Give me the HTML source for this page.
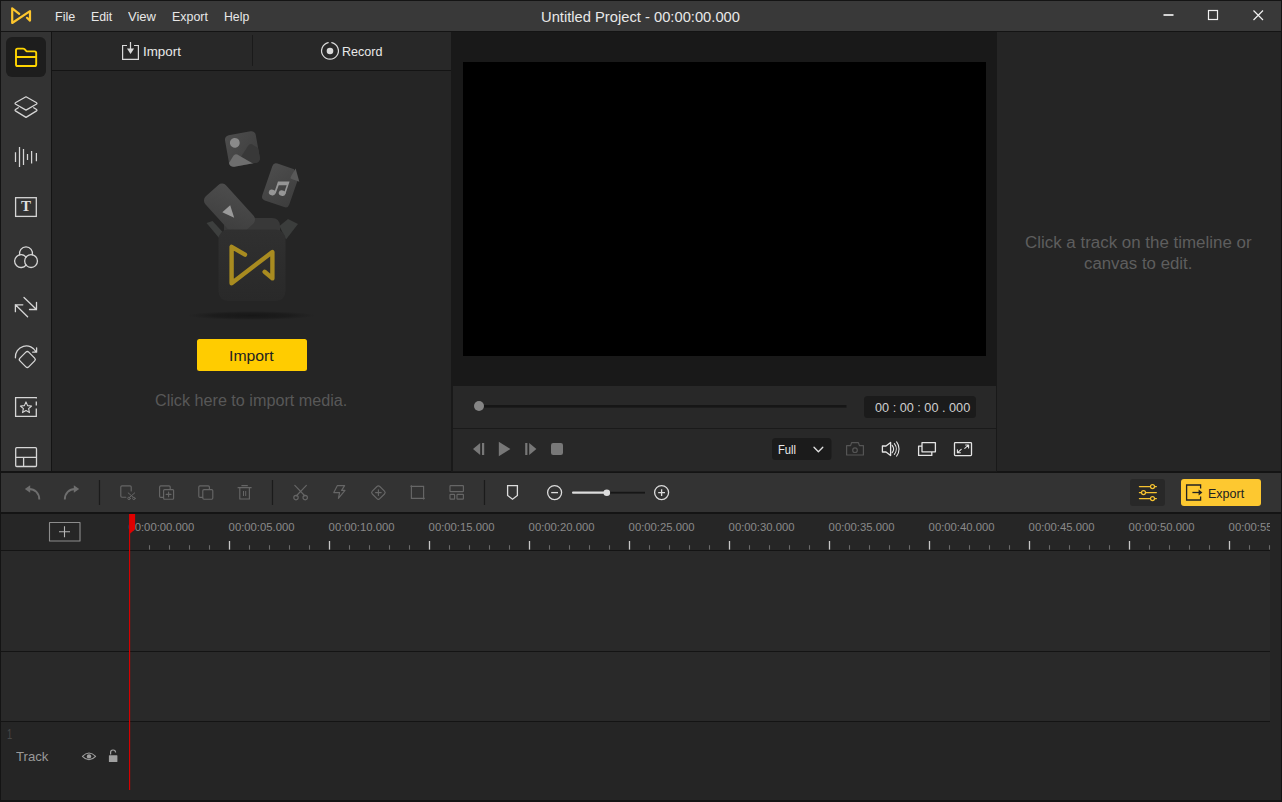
<!DOCTYPE html>
<html><head><meta charset="utf-8"><title>Untitled Project</title>
<style>
*{box-sizing:border-box;margin:0;padding:0}
html,body{width:1282px;height:802px;overflow:hidden;background:#141414}
body{position:relative;font-family:"Liberation Sans",sans-serif;color:#e6e6e6;font-size:13px}
.abs,svg.i{position:absolute}
.t{position:absolute;white-space:nowrap;line-height:1;transform-origin:0 0}
svg.i{overflow:visible;fill:none;stroke-linecap:round;stroke-linejoin:round}
#titlebar{left:1px;top:1px;width:1280px;height:30px;background:#393939}
#sidebar{left:1px;top:32px;width:50px;height:439px;background:#333}
#sel{left:6px;top:37px;width:40px;height:40px;border-radius:6px;background:#1d1d1d}
#lptab{left:52px;top:32px;width:399px;height:38px;background:#282828}
#lp{left:52px;top:71px;width:399px;height:400px;background:#252525}
#pv{left:451px;top:32px;width:546px;height:440px;background:#191919}
#video{left:463px;top:62px;width:523px;height:294px;background:#000}
#ctl{left:453px;top:386px;width:543px;height:85px;background:#282828}
#ctlsep{left:453px;top:428px;width:543px;height:1px;background:#1a1a1a}
#rp{left:997px;top:32px;width:284px;height:439px;background:#252525}
#tb{left:1px;top:473px;width:1280px;height:39px;background:#333}
#ruler{left:1px;top:514px;width:1269px;height:36px;background:#262626}
#tr1{left:1px;top:551px;width:1269px;height:100px;background:#292929}
#tr2{left:1px;top:652px;width:1269px;height:69px;background:#292929}
#tr3{left:1px;top:722px;width:1280px;height:78px;background:#252525}
#rcol{left:1270px;top:514px;width:11px;height:286px;background:#252525}
.rl{top:522.1px;font-size:11.3px;color:#8a8a8a}
#rlab{left:0;top:0;width:1270px;height:802px;overflow:hidden}
</style></head><body>
<div class="abs" id="titlebar"></div>
<div class="abs" id="sidebar"></div>
<div class="abs" id="sel"></div>
<div class="abs" id="lptab"></div>
<div class="abs" id="lp"></div>
<div class="abs" id="pv"></div>
<div class="abs" id="video"></div>
<div class="abs" id="ctl"></div>
<div class="abs" id="ctlsep"></div>
<div class="abs" id="rp"></div>
<div class="abs" id="tb"></div>
<div class="abs" id="ruler"></div>
<div class="abs" id="tr1"></div>
<div class="abs" id="tr2"></div>
<div class="abs" id="tr3"></div>
<div class="abs" id="rcol"></div>
<svg class="i" style="left:180px;top:110px" width="140" height="220" viewBox="180 110 140 220">
<defs>
<linearGradient id="gc" x1="0" y1="0" x2="1" y2="1"><stop offset="0" stop-color="#4d4d4d"/><stop offset="1" stop-color="#3d3d3d"/></linearGradient>
<linearGradient id="gb" x1="0" y1="0" x2="0" y2="1"><stop offset="0" stop-color="#303030"/><stop offset="1" stop-color="#292929"/></linearGradient>
<radialGradient id="gs"><stop offset="0" stop-color="#171717"/><stop offset="0.6" stop-color="#1a1a1a" stop-opacity="0.8"/><stop offset="1" stop-color="#1c1c1c" stop-opacity="0"/></radialGradient>
<clipPath id="cimg"><rect x="-15.6" y="-16" width="31.2" height="32" rx="4.5"/></clipPath>
</defs>
<!-- shadow -->
<ellipse cx="251.5" cy="315.5" rx="64" ry="4.5" fill="url(#gs)"/>
<!-- image card -->
<g transform="translate(242.4,149) rotate(-10)">
<rect x="-15.6" y="-16" width="31.2" height="32" rx="4.5" fill="url(#gc)"/>
<g clip-path="url(#cimg)">
<path d="M-4,9 L6,-2 Q8.5,-4.5 11,-2.5 L17,3 V17 H-4 Z" fill="#383838"/>
<path d="M-16,12 L-10,5 Q-8,3 -6,4.6 L9,17 H-16 Z" fill="#6e6e6e"/>
</g>
<circle cx="-6.4" cy="-7.4" r="4.9" fill="#8a8a8a"/>
</g>
<!-- music card -->
<g transform="translate(280.6,185.2) rotate(19)">
<path d="M-14,-15.5 Q-14,-19.5 -10,-19.5 H7.5 L14.5,-10 V15.5 Q14.500,19.5 10.5,19.5 H-10 Q-14,19.5 -14,15.500 Z" fill="url(#gc)"/>
<path d="M8.8,-20.6 L16.6,-9.4 H8.4 Q6.6,-9.4 6.800,-11.4 Z" fill="#595959"/>
<g transform="translate(-0.6,2.6) rotate(-5)" fill="#969696"><ellipse cx="-5.6" cy="6.6" rx="3.4" ry="2.8"/><ellipse cx="4.2" cy="4.8" rx="3.4" ry="2.8"/>
<path d="M-3.6,6.6 L-2.6,-5.4 L8.6,-8.4 L7.600,4.8 L6,4.8 L6.7,-4 L-1,-2 L-2,6.6 Z"/></g>
</g>
<!-- flaps + back -->
<path d="M206.500,223 L212.500,221 L223.5,233 L219.500,238.500 Z" fill="#3d3f3e"/>
<path d="M288,219 L298,224 L286,239.500 L279.500,226 Z" fill="#3b3d3c"/>
<path d="M224,238 V224 Q224,218 230,218 H272 Q279.500,218 280,226 V238 Z" fill="#383838"/>
<!-- play card -->
<g transform="translate(229.500,210) rotate(48)">
<rect x="-26" y="-14" width="52" height="28" rx="5.5" fill="url(#gc)"/>
<path d="M-3.1,-3.7 L8.9,1.7 L-3.1,6.9 Z" fill="#9a9a9a"/>
</g>
<!-- front of box -->
<rect x="218.5" y="229.6" width="67" height="71.4" rx="9.5" fill="url(#gb)"/>
<path d="M245,254.600 L231.600,246.800 V283.200 L272.400,252 V278.400 L264.600,271.800" stroke="#a88b20" stroke-width="4.400" fill="none" stroke-linejoin="round" stroke-linecap="round"/>
</svg>

<svg class="i" id="ic" style="left:0;top:0" width="1282" height="802" viewBox="0 0 1282 802">
<!-- app logo -->
<path d="M19.2,13.8 L12.2,8.3 L12.2,23 L30,11.2 L30,20.6 L27,17.8" stroke="#fdc52d" stroke-width="2.2"/>
<!-- window controls -->
<g stroke="#f0f0f0" stroke-width="1.2" stroke-linecap="butt" stroke-linejoin="miter">
<path d="M1163.5,15 H1173.5" stroke-width="1.7"/>
<rect x="1208.5" y="10.5" width="9" height="9"/>
<path d="M1253.5,10.5 L1263,20 M1263,10.5 L1253.5,20"/>
</g>
<!-- sidebar: folder (selected) -->
<path d="M17.6,48.6 H23 Q23.9,48.6 24.5,49.2 L26.2,50.9 Q26.8,51.4 27.6,51.4 H34.6 Q36.2,51.4 36.2,53 V64.4 Q36.2,66 34.6,66 H17.6 Q16,66 16,64.4 V50.2 Q16,48.6 17.6,48.6 Z M16,57 H36.2" stroke="#ffd500" stroke-width="1.9"/>
<!-- sidebar icons -->
<g stroke="#d6d6d6" stroke-width="1.3">
<!-- layers -->
<path d="M26,96.8 L36.2,102.5 Q37.700,103.4 36.2,104.3 L26,110.1 L15.8,104.3 Q14.3,103.4 15.8,102.5 Z"/>
<path d="M18.3,107.8 L15.8,109.3 Q14.3,110.2 15.8,111.1 L26,117.4 L36.2,111.1 Q37.7,110.2 36.2,109.3 L33.7,107.8"/>
<!-- audio -->
<path d="M15.5,152.2 V162 M19.5,147 V167 M23.5,149 V165 M27.5,154 V160 M31.6,151 V163.4 M36.4,153 V161.2" stroke-linecap="butt" stroke-width="1.25"/>
<!-- text box -->
<rect x="15.6" y="197.7" width="20.7" height="18.7" stroke-linejoin="miter"/>
<!-- colour circles -->
<circle cx="31.05" cy="261.1" r="6.4"/><path d="M26.03,257.14 A6.4,6.4 0 1 0 26.03,265.06"/>
<path d="M19.7,254.9 A6.5,6.5 0 1 1 32.3,254.9"/>
<!-- transition arrows -->
<path d="M24,297.5 L36.5,309.5 M29.5,309.5 H36.5 V302.3 M27.6,316.7 L15.4,304.8 M22.8,304.8 H15.4 V311.7" stroke-linejoin="miter"/>
<!-- rotate -->
<path d="M15.4,357.8 A11,11 0 0 1 36.2,352 M32.7,352.2 H36.6 V347.8"/>
<rect x="-6.2" y="-6.2" width="12.4" height="12.4" rx="2" transform="translate(27.3,359.5) rotate(45)"/>
<!-- star box -->
<path d="M36.3,398.6 V397.7 H15.6 V416.4 H36.3 V408.5 M36.3,401.6 V405.6" stroke-linejoin="miter" stroke-linecap="butt"/>
<path d="M26,401.9 L27.6,405.6 L31.6,406 L28.6,408.7 L29.5,412.6 L26,410.6 L22.5,412.6 L23.4,408.7 L20.4,406 L24.4,405.6 Z" stroke-width="1.1"/>
<!-- layout -->
<path d="M16.7,447.7 H35.5 Q36.5,447.7 36.5,448.7 V465.5 Q36.5,466.5 35.5,466.5 H16.7 Q15.7,466.5 15.7,465.5 V448.7 Q15.7,447.7 16.7,447.7 Z M15.7,457.4 H36.5 M23.6,457.4 V466.5"/>
</g>
<!-- Import / Record tab icons -->
<g stroke="#dadada" stroke-width="1.2" stroke-linejoin="miter">
<path d="M127,45.5 H122.6 V59.4 H138.4 V45.5 H134" stroke-linecap="butt"/>
<path d="M130.5,42 V50" stroke-linecap="butt"/>
<path d="M127,48.5 H134.1 L130.55,53.9 Z" fill="#dadada" stroke="none"/>
<path d="M331.8,42.6 A8.4,8.4 0 1 1 328.2,42.6" />
<circle cx="330" cy="51" r="3.3" fill="#dadada" stroke="none"/>
</g>
<path d="M252.5,35.5 V65.5" stroke="#1a1a1a" stroke-width="1"/>
<!-- Import button -->
<rect x="197" y="339" width="110" height="32" rx="2.5" fill="#ffcc00"/>
<!-- preview slider -->
<rect x="479" y="405" width="367.5" height="2.6" fill="#161616"/>
<circle cx="479" cy="406" r="5" fill="#858585"/>
<rect x="864" y="396" width="112" height="22" rx="3.5" fill="#1b1b1b"/>
<!-- playback -->
<g fill="#787878" stroke="none">
<path d="M480.2,443 V455 L473,449 Z"/><rect x="482" y="443" width="2.2" height="12"/>
<path d="M498.8,441.8 V456.2 L510.4,449 Z"/>
<rect x="525.2" y="443" width="2.2" height="12"/><path d="M529.2,443 V455 L536.4,449 Z"/>
<rect x="551" y="443" width="12" height="12" rx="2.2"/>
</g>
<!-- Full dropdown -->
<rect x="772" y="438" width="59.5" height="22" rx="3.5" fill="#1b1b1b"/>
<path d="M814,447.2 L818.4,451.8 L822.8,447.2" stroke="#e0e0e0" stroke-width="1.3"/>
<!-- camera (disabled) -->
<g stroke="#555" stroke-width="1.2">
<path d="M846.6,445.6 H850.6 L851.6,442.6 H858.4 L859.4,445.6 H863.4 V455 H846.6 Z" stroke-linejoin="round"/>
<circle cx="855" cy="450.2" r="2.3"/>
</g>
<!-- volume, windows, fullscreen -->
<g stroke="#e4e4e4" stroke-width="1.3">
<path d="M882.4,446 H886 L890.6,442.4 V455.6 L886,452 H882.4 Z" stroke-linejoin="round"/>
<path d="M892.2,445.3 A6,6 0 0 1 892.2,452.7 M894.4,443.6 A8.8,8.8 0 0 1 894.4,454.4 M896.6,441.9 A11.6,11.6 0 0 1 896.6,456.1" stroke-width="1.1"/>
<path d="M922,442.6 H935.4 V451.8 H922 Z M921.8,446.2 H918.6 V455.4 H931.8 V452" stroke-linejoin="round"/>
<rect x="954.5" y="442.6" width="17" height="13" rx="0.8"/>
<path d="M957.6,452.6 L961.2,449.4 M957.4,449.8 V452.8 H960.4 M964.8,448.4 L968.4,445.2 M965.6,445 H968.6 V448" stroke-width="1.1"/>
</g>
<!-- toolbar separators -->
<path d="M99.5,480 V505 M272.5,480 V505 M484.5,480 V505" stroke="#1b1b1b" stroke-width="1.2" stroke-linecap="butt"/>
<!-- toolbar disabled icons -->
<g stroke="#666" stroke-width="1.15">
<!-- undo / redo -->
<path d="M39.3,499.6 C39.3,493.2 35,489 29,489" stroke="#6e6e6e" stroke-width="1.9" stroke-linecap="butt"/>
<path d="M24.8,489 L30.2,485.2 V492.8 Z" fill="#6e6e6e" stroke="none"/>
<path d="M64.8,499.6 C64.8,493.2 69.1,489 75.1,489" stroke="#6e6e6e" stroke-width="1.9" stroke-linecap="butt"/>
<path d="M79.2,489 L73.8,485.2 V492.8 Z" fill="#6e6e6e" stroke="none"/>
<!-- cut clip -->
<path d="M125.8,497.2 H122 Q120.8,497.2 120.8,496 V487 Q120.8,485.8 122,485.8 H130 Q131.2,485.8 131.2,487 V491"/>
<path d="M128.2,492.9 L133.3,497.3 M134.7,492.9 L129.6,497.3" stroke-width="1"/>
<circle cx="129" cy="498.4" r="1.25" stroke-width="0.9"/><circle cx="133.9" cy="498.4" r="1.25" stroke-width="0.9"/>
<!-- duplicate -->
<path d="M163.4,497.4 H160.8 Q159.6,497.4 159.6,496.2 V487 Q159.6,485.8 160.8,485.8 H169 Q170.2,485.8 170.2,487 V489.4"/>
<rect x="163.6" y="489.6" width="10" height="9.6" rx="1"/>
<path d="M166.2,494.4 H171 M168.6,492 V496.8" stroke-width="1.1"/>
<!-- copy -->
<path d="M202.6,497.4 H200 Q198.8,497.4 198.8,496.2 V487 Q198.8,485.8 200,485.8 H208.2 Q209.4,485.8 209.4,487 V489.4"/>
<rect x="202.8" y="489.6" width="10" height="9.6" rx="1.2"/>
<!-- trash -->
<path d="M237.6,487.6 H251.6 M241.4,485.6 H247.8 M239.8,487.8 V499 H249.4 V487.8" stroke-linecap="butt" stroke-linejoin="miter"/>
<path d="M243.5,491 V496 M245.7,491 V496" stroke-width="1" stroke-linecap="butt"/>
<!-- scissors -->
<path d="M294.8,485.4 L305,496 M306.4,485.4 L296.2,496"/>
<circle cx="296" cy="497.6" r="2.2"/><circle cx="305.2" cy="497.6" r="2.2"/>
<!-- lightning -->
<path d="M337.4,485.6 H344.6 L341.6,490.4 H345 L338.4,498.4 L339.6,492.6 H333.8 Z"/>
<!-- keyframe -->
<rect x="-5.3" y="-5.3" width="10.6" height="10.6" rx="2" transform="translate(378.4,492.6) rotate(45)"/>
<path d="M375.6,492.6 H381.2 M378.4,489.8 V495.4" stroke-width="1.1"/>
<!-- crop -->
<path d="M411.4,485.2 V498.4 H424.8 M410.4,486.4 H423.6 V499.6" stroke-linecap="butt" stroke-linejoin="miter"/>
<!-- layout -->
<rect x="450" y="485.6" width="13.4" height="6" rx="0.6"/>
<rect x="450" y="494.4" width="4.6" height="4.8" rx="0.6"/>
<rect x="457" y="494.4" width="6.4" height="4.8" rx="0.6"/>
</g>
<!-- marker + zoom -->
<g stroke="#dcdcdc" stroke-width="1.3">
<path d="M507.6,485.6 H517.4 V495.4 L512.5,499.2 L507.6,495.4 Z" stroke-linejoin="miter"/>
<circle cx="554.6" cy="492.6" r="7"/><path d="M551.2,492.6 H558" stroke-linecap="butt"/>
<circle cx="661.6" cy="492.6" r="7"/><path d="M658.2,492.6 H665 M661.6,489.2 V496" stroke-linecap="butt"/>
</g>
<rect x="607" y="491.8" width="38" height="1.8" fill="#161616"/>
<rect x="572" y="491.6" width="35" height="2.2" rx="1" fill="#dcdcdc"/>
<circle cx="606.8" cy="492.7" r="3.3" fill="#dcdcdc"/>
<!-- settings & export -->
<rect x="1130" y="479" width="35" height="27" rx="3" fill="#282828"/>
<g stroke="#f5c230" stroke-width="1.2">
<path d="M1139.4,486.6 H1150.4 M1154.6,486.6 H1156.4 M1139.4,492.6 H1141.4 M1145.6,492.6 H1156.4 M1139.4,498.6 H1150.4 M1154.6,498.6 H1156.4"/>
<circle cx="1152.5" cy="486.6" r="2"/><circle cx="1143.5" cy="492.6" r="2"/><circle cx="1152.5" cy="498.6" r="2"/>
</g>
<rect x="1181" y="479" width="80" height="27" rx="3" fill="#fdc830"/>
<path d="M1200.6,488.4 V485 H1186.6 V500 H1200.6 V496.6" stroke="#222" stroke-width="1.3" stroke-linejoin="miter" stroke-linecap="butt"/>
<path d="M1192.4,492.5 H1199.5" stroke="#222" stroke-width="1.3" stroke-linecap="butt"/>
<path d="M1198.6,489.6 L1202.4,492.5 L1198.6,495.4 Z" fill="#222"/>
<!-- add track -->
<rect x="49.5" y="522.5" width="30.5" height="18.5" stroke="#8c8c8c" stroke-width="1.1"/>
<path d="M59,531.7 H70 M64.5,526.2 V537.2" stroke="#b4b4b4" stroke-width="1.1" stroke-linecap="butt"/>
<!-- ruler ticks -->
<g id="ticks" stroke-linecap="butt"><path d="M149.5,545.2 V549.6" stroke="#6a6a6a" stroke-width="1.1"/><path d="M169.5,545.2 V549.6" stroke="#6a6a6a" stroke-width="1.1"/><path d="M189.5,545.2 V549.6" stroke="#6a6a6a" stroke-width="1.1"/><path d="M209.5,545.2 V549.6" stroke="#6a6a6a" stroke-width="1.1"/><path d="M229.5,541 V549.6" stroke="#c8c8c8" stroke-width="1.3"/><path d="M249.5,545.2 V549.6" stroke="#6a6a6a" stroke-width="1.1"/><path d="M269.5,545.2 V549.6" stroke="#6a6a6a" stroke-width="1.1"/><path d="M289.5,545.2 V549.6" stroke="#6a6a6a" stroke-width="1.1"/><path d="M309.5,545.2 V549.6" stroke="#6a6a6a" stroke-width="1.1"/><path d="M329.5,541 V549.6" stroke="#c8c8c8" stroke-width="1.3"/><path d="M349.5,545.2 V549.6" stroke="#6a6a6a" stroke-width="1.1"/><path d="M369.5,545.2 V549.6" stroke="#6a6a6a" stroke-width="1.1"/><path d="M389.5,545.2 V549.6" stroke="#6a6a6a" stroke-width="1.1"/><path d="M409.5,545.2 V549.6" stroke="#6a6a6a" stroke-width="1.1"/><path d="M429.5,541 V549.6" stroke="#c8c8c8" stroke-width="1.3"/><path d="M449.5,545.2 V549.6" stroke="#6a6a6a" stroke-width="1.1"/><path d="M469.5,545.2 V549.6" stroke="#6a6a6a" stroke-width="1.1"/><path d="M489.5,545.2 V549.6" stroke="#6a6a6a" stroke-width="1.1"/><path d="M509.5,545.2 V549.6" stroke="#6a6a6a" stroke-width="1.1"/><path d="M529.5,541 V549.6" stroke="#c8c8c8" stroke-width="1.3"/><path d="M549.5,545.2 V549.6" stroke="#6a6a6a" stroke-width="1.1"/><path d="M569.5,545.2 V549.6" stroke="#6a6a6a" stroke-width="1.1"/><path d="M589.5,545.2 V549.6" stroke="#6a6a6a" stroke-width="1.1"/><path d="M609.5,545.2 V549.6" stroke="#6a6a6a" stroke-width="1.1"/><path d="M629.5,541 V549.6" stroke="#c8c8c8" stroke-width="1.3"/><path d="M649.5,545.2 V549.6" stroke="#6a6a6a" stroke-width="1.1"/><path d="M669.5,545.2 V549.6" stroke="#6a6a6a" stroke-width="1.1"/><path d="M689.5,545.2 V549.6" stroke="#6a6a6a" stroke-width="1.1"/><path d="M709.5,545.2 V549.6" stroke="#6a6a6a" stroke-width="1.1"/><path d="M729.5,541 V549.6" stroke="#c8c8c8" stroke-width="1.3"/><path d="M749.5,545.2 V549.6" stroke="#6a6a6a" stroke-width="1.1"/><path d="M769.5,545.2 V549.6" stroke="#6a6a6a" stroke-width="1.1"/><path d="M789.5,545.2 V549.6" stroke="#6a6a6a" stroke-width="1.1"/><path d="M809.5,545.2 V549.6" stroke="#6a6a6a" stroke-width="1.1"/><path d="M829.5,541 V549.6" stroke="#c8c8c8" stroke-width="1.3"/><path d="M849.5,545.2 V549.6" stroke="#6a6a6a" stroke-width="1.1"/><path d="M869.5,545.2 V549.6" stroke="#6a6a6a" stroke-width="1.1"/><path d="M889.5,545.2 V549.6" stroke="#6a6a6a" stroke-width="1.1"/><path d="M909.5,545.2 V549.6" stroke="#6a6a6a" stroke-width="1.1"/><path d="M929.5,541 V549.6" stroke="#c8c8c8" stroke-width="1.3"/><path d="M949.5,545.2 V549.6" stroke="#6a6a6a" stroke-width="1.1"/><path d="M969.5,545.2 V549.6" stroke="#6a6a6a" stroke-width="1.1"/><path d="M989.5,545.2 V549.6" stroke="#6a6a6a" stroke-width="1.1"/><path d="M1009.5,545.2 V549.6" stroke="#6a6a6a" stroke-width="1.1"/><path d="M1029.5,541 V549.6" stroke="#c8c8c8" stroke-width="1.3"/><path d="M1049.5,545.2 V549.6" stroke="#6a6a6a" stroke-width="1.1"/><path d="M1069.5,545.2 V549.6" stroke="#6a6a6a" stroke-width="1.1"/><path d="M1089.5,545.2 V549.6" stroke="#6a6a6a" stroke-width="1.1"/><path d="M1109.5,545.2 V549.6" stroke="#6a6a6a" stroke-width="1.1"/><path d="M1129.5,541 V549.6" stroke="#c8c8c8" stroke-width="1.3"/><path d="M1149.5,545.2 V549.6" stroke="#6a6a6a" stroke-width="1.1"/><path d="M1169.5,545.2 V549.6" stroke="#6a6a6a" stroke-width="1.1"/><path d="M1189.5,545.2 V549.6" stroke="#6a6a6a" stroke-width="1.1"/><path d="M1209.5,545.2 V549.6" stroke="#6a6a6a" stroke-width="1.1"/><path d="M1229.5,541 V549.6" stroke="#c8c8c8" stroke-width="1.3"/><path d="M1249.5,545.2 V549.6" stroke="#6a6a6a" stroke-width="1.1"/><path d="M1269.5,545.2 V549.6" stroke="#6a6a6a" stroke-width="1.1"/></g>
<!-- eye + lock -->
<path d="M82.4,756.4 Q89,749.6 95.6,756.4 Q89,763.2 82.4,756.4 Z" stroke="#a0a0a0" stroke-width="1.1"/>
<circle cx="89" cy="756.4" r="2.2" fill="#a0a0a0"/>
<rect x="108.9" y="755.2" width="8.5" height="6.8" rx="0.6" fill="#a0a0a0"/>
<path d="M110.6,754.6 V752.6 A2.5,2.5 0 0 1 115.6,752.4" stroke="#a0a0a0" stroke-width="1.2" stroke-linecap="butt"/>
</svg>

<span class="t" style="left:54.70px;top:10.00px;font-size:13px;color:#e8e8e8;transform:scaleX(0.9641);">File</span>
<span class="t" style="left:90.80px;top:10.00px;font-size:13px;color:#e8e8e8;transform:scaleX(0.9506);">Edit</span>
<span class="t" style="left:127.70px;top:10.00px;font-size:13px;color:#e8e8e8;transform:scaleX(1.0017);">View</span>
<span class="t" style="left:171.90px;top:10.00px;font-size:13px;color:#e8e8e8;transform:scaleX(0.9553);">Export</span>
<span class="t" style="left:223.60px;top:10.00px;font-size:13px;color:#e8e8e8;transform:scaleX(0.9421);">Help</span>
<span class="t" style="left:541.20px;top:9.03px;font-size:15.2px;color:#e8e8e8;transform:scaleX(0.9699);">Untitled Project - 00:00:00.000</span>
<span class="t" style="left:143.00px;top:45.00px;font-size:13px;color:#e8e8e8;transform:scaleX(1.0287);">Import</span>
<span class="t" style="left:341.50px;top:45.00px;font-size:13px;color:#e8e8e8;transform:scaleX(0.9637);">Record</span>
<span class="t" style="left:229.10px;top:348.30px;font-size:15px;color:#222;transform:scaleX(1.0514);">Import</span>
<span class="t" style="left:154.90px;top:393.06px;font-size:16px;color:#585858;transform:scaleX(1.0105);">Click here to import media.</span>
<span class="t" style="left:1024.70px;top:235.06px;font-size:16px;color:#5e5e5e;transform:scaleX(1.0573);">Click a track on the timeline or</span>
<span class="t" style="left:1083.50px;top:255.86px;font-size:16px;color:#5e5e5e;transform:scaleX(1.0507);">canvas to edit.</span>
<span class="t" style="left:875.00px;top:402.12px;font-size:12.5px;color:#cfcfcf;transform:scaleX(1.0146);">00 : 00 : 00 . 000</span>
<span class="t" style="left:777.50px;top:442.50px;font-size:13px;color:#e8e8e8;transform:scaleX(0.8591);">Full</span>
<span class="t" style="left:1208.00px;top:486.50px;font-size:13px;color:#222;transform:scaleX(0.9607);">Export</span>
<span class="t" style="left:7.10px;top:727.15px;font-size:14px;color:#484848;transform:scaleX(0.6669);">1</span>
<span class="t" style="left:15.50px;top:749.57px;font-size:13.5px;color:#999;transform:scaleX(0.9744);">Track</span>
<div class="abs" id="rlab"><span class="t rl" style="left:128.4px">00:00:00.000</span><span class="t rl" style="left:228.6px">00:00:05.000</span><span class="t rl" style="left:328.6px">00:00:10.000</span><span class="t rl" style="left:428.6px">00:00:15.000</span><span class="t rl" style="left:528.6px">00:00:20.000</span><span class="t rl" style="left:628.6px">00:00:25.000</span><span class="t rl" style="left:728.6px">00:00:30.000</span><span class="t rl" style="left:828.6px">00:00:35.000</span><span class="t rl" style="left:928.6px">00:00:40.000</span><span class="t rl" style="left:1028.6px">00:00:45.000</span><span class="t rl" style="left:1128.6px">00:00:50.000</span><span class="t rl" style="left:1228.6px">00:00:55.000</span></div>
<span class="t" style="left:20.9px;top:199.3px;font-family:'Liberation Serif',serif;font-weight:bold;font-size:15px;color:#dedede">T</span>
<svg class="i" style="left:0;top:0" width="1282" height="802" viewBox="0 0 1282 802">
<path d="M129,514 H135.1 V529.2 L130.2,533.6 H129 Z" fill="#e00000" stroke="none"/>
<rect x="129" y="514" width="1.15" height="276" fill="#d60000"/>
</svg>

</body></html>
